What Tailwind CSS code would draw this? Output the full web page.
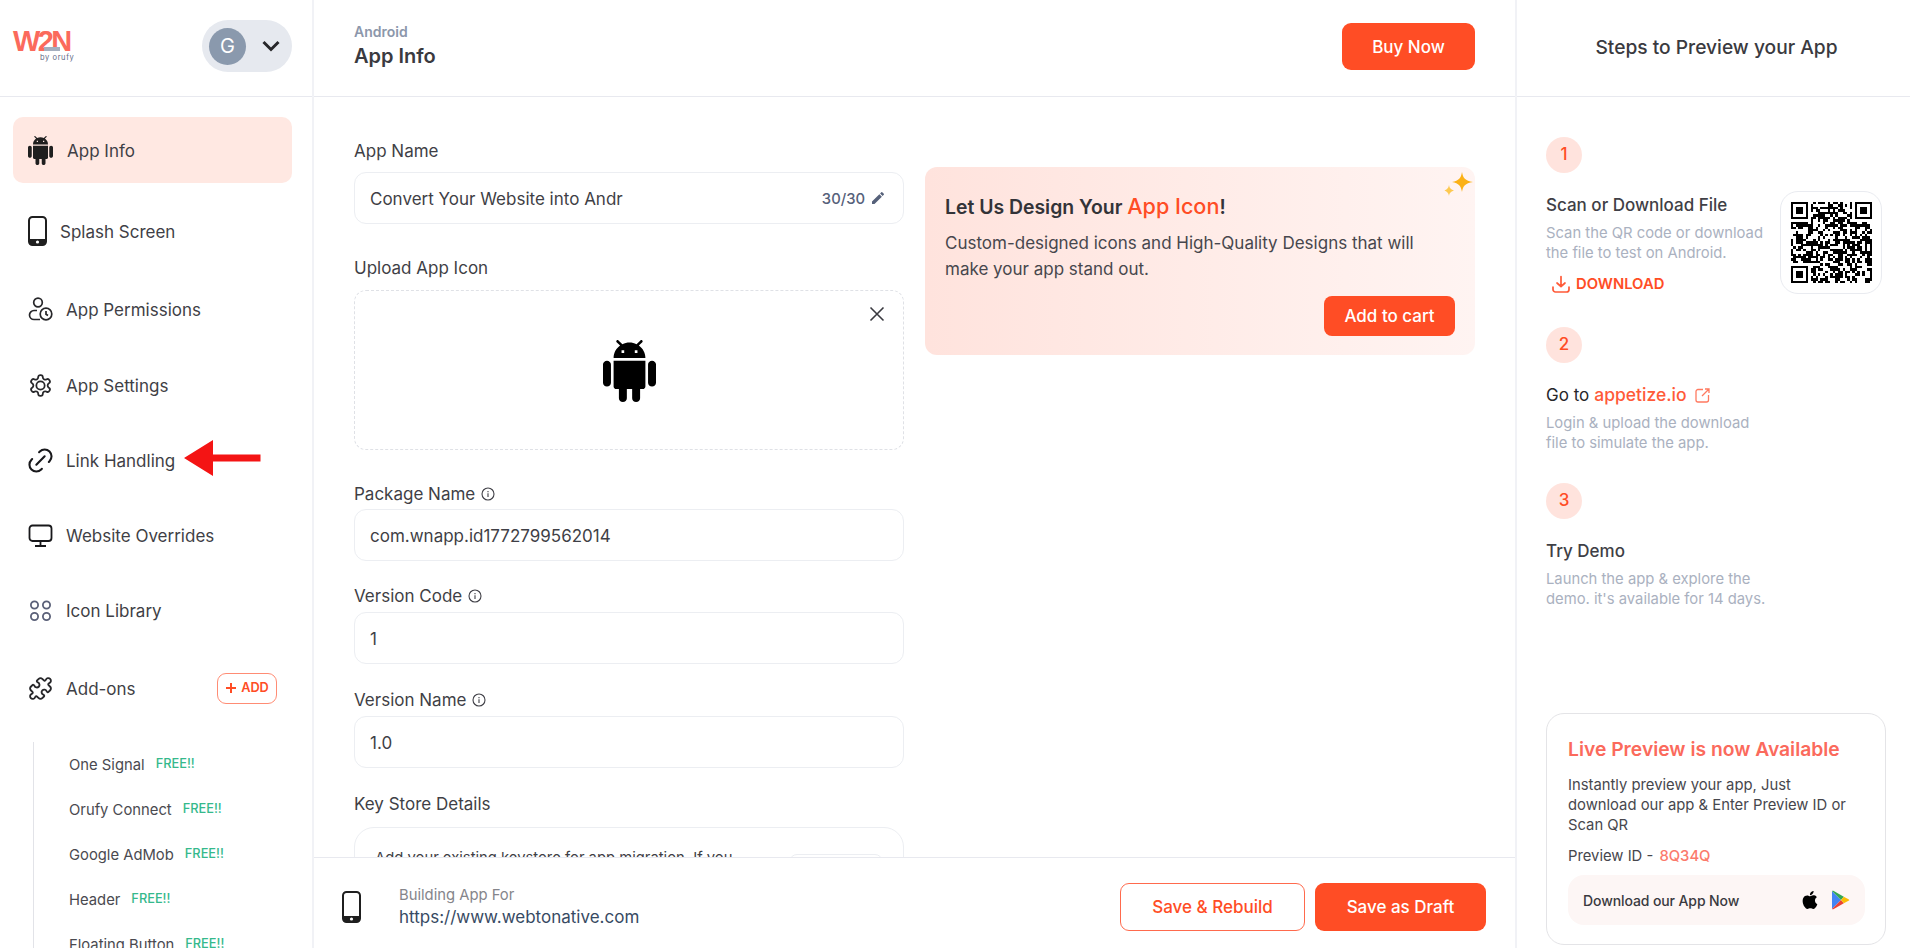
<!DOCTYPE html>
<html lang="en">
<head>
    <meta charset="UTF-8">
    <title>App Info</title>
    <script src="https://cdn.jsdelivr.net/npm/@tailwindcss/browser@4"></script>
</head>
<body class="bg-white font-[Inter,sans-serif] text-[#3f3f46] overflow-hidden">
<div class="relative flex h-[948px] w-[1910px] overflow-hidden">

    <!-- Sidebar -->
    <aside class="w-[314px] shrink-0 border-r-2 border-[#f1f2f6] flex flex-col overflow-hidden">
        <div class="h-[97px] shrink-0 border-b border-[#e8e9ef] flex items-start justify-between pl-[13px] pr-[20px]">
            <div class="relative w-[62px] h-[34px] mt-[28px]">
                <span class="absolute left-0 top-[1px] font-['Liberation_Sans'] font-bold text-[29px] leading-[24px] tracking-[-2.6px] text-[#fb6a5c]">W2N</span>
                <span class="absolute left-[31px] top-[19px] w-[16px] h-[4px] bg-[#a4aebe]"></span>
                <span class="absolute left-[27px] top-[25px] text-[7.5px] leading-[9px] tracking-[0.6px] text-[#5f6b86] whitespace-nowrap">by orufy</span>
            </div>
            <div class="mt-[20px] w-[90px] h-[52px] rounded-full bg-[#e6e9ef] flex items-center pl-[7px]">
                <div class="w-[37px] h-[37px] rounded-full bg-[#8a99ad] text-white text-[20px] flex items-center justify-center">G</div>
                <svg class="ml-[15px]" width="20" height="14" viewBox="0 0 20 14" fill="none" stroke="#27272a" stroke-width="3"><path d="M2.500 3l7.500 7.500L17.500 3"/></svg>
            </div>
        </div>
        <nav class="pl-[13px] pr-[20px] pt-[20px] text-[17px]">
            <a class="h-[66px] rounded-[10px] bg-[#ffe8e2] flex items-center pl-[15px] gap-[14px]">
                <svg width="25" height="29" viewBox="2 0 20 24" preserveAspectRatio="none" fill="#1f1f1f"><path d="M6 18c0 .55.45 1 1 1h1v3.5c0 .83.67 1.5 1.5 1.5s1.5-.67 1.5-1.5V19h2v3.5c0 .83.67 1.5 1.5 1.5s1.5-.67 1.5-1.5V19h1c.55 0 1-.45 1-1V8H6v10zM3.5 8C2.67 8 2 8.67 2 9.5v7c0 .83.67 1.5 1.5 1.5S5 17.33 5 16.5v-7C5 8.67 4.33 8 3.5 8zm17 0c-.83 0-1.5.67-1.5 1.5v7c0 .83.67 1.5 1.5 1.5s1.5-.67 1.5-1.5v-7c0-.83-.67-1.5-1.5-1.5zm-4.97-5.84l1.3-1.3c.2-.2.2-.51 0-.71-.2-.2-.51-.2-.71 0l-1.48 1.48C13.85 1.23 12.95 1 12 1c-.96 0-1.86.23-2.66.63L7.85.15c-.2-.2-.51-.2-.71 0-.2.2-.2.51 0 .71l1.31 1.31C6.97 3.26 6 5.01 6 7h12c0-1.99-.97-3.75-2.47-4.84zM10 5H9V4h1v1zm5 0h-1V4h1v1z"/></svg>
                <span class="pt-[3px]">App Info</span>
            </a>
            <a class="mt-[15px] h-[66px] flex items-center pl-[15px] gap-[13px]">
                <svg width="19" height="30" viewBox="0 0 19 30"><rect x="1" y="1" width="17" height="28" rx="3.5" fill="none" stroke="#1f1f1f" stroke-width="2"/><path d="M1 23h17v3a3 3 0 0 1-3 3H4a3 3 0 0 1-3-3z" fill="#1f1f1f"/><circle cx="9.5" cy="26" r="1.6" fill="#fff"/></svg>
                <span class="pt-[3px]">Splash Screen</span>
            </a>
            <a class="mt-[12px] h-[66px] flex items-center pl-[15px] gap-[13px]">
                <svg width="25" height="24" viewBox="0 0 25 24" fill="none" stroke="#27272a" stroke-width="1.7"><circle cx="10" cy="5.5" r="4.3"/><path d="M9 13.5H6a4.5 4.5 0 0 0 0 9h6"/><circle cx="18" cy="17" r="5.8"/><path d="M18 14v3.2l2 1.3"/></svg>
                <span class="pt-[3px]">App Permissions</span>
            </a>
            <a class="mt-[10px] h-[66px] flex items-center pl-[15px] gap-[13px]">
                <svg width="25" height="25" viewBox="0 0 24 24" fill="none" stroke="#27272a" stroke-width="1.7" stroke-linejoin="round"><path d="M12.22 2h-.44a2 2 0 0 0-2 2v.18a2 2 0 0 1-1 1.73l-.43.25a2 2 0 0 1-2 0l-.15-.08a2 2 0 0 0-2.73.73l-.22.38a2 2 0 0 0 .73 2.73l.15.1a2 2 0 0 1 1 1.72v.51a2 2 0 0 1-1 1.74l-.15.09a2 2 0 0 0-.73 2.73l.22.38a2 2 0 0 0 2.73.73l.15-.08a2 2 0 0 1 2 0l.43.25a2 2 0 0 1 1 1.73V20a2 2 0 0 0 2 2h.44a2 2 0 0 0 2-2v-.18a2 2 0 0 1 1-1.73l.43-.25a2 2 0 0 1 2 0l.15.08a2 2 0 0 0 2.73-.73l.22-.39a2 2 0 0 0-.73-2.73l-.15-.08a2 2 0 0 1-1-1.74v-.5a2 2 0 0 1 1-1.74l.15-.09a2 2 0 0 0 .73-2.73l-.22-.38a2 2 0 0 0-2.73-.73l-.15.08a2 2 0 0 1-2 0l-.43-.25a2 2 0 0 1-1-1.73V4a2 2 0 0 0-2-2z"/><circle cx="12" cy="12" r="4"/></svg>
                <span class="pt-[3px]">App Settings</span>
            </a>
            <a class="mt-[9px] h-[66px] flex items-center pl-[15px] gap-[13px]">
                <svg width="25" height="25" viewBox="3 3 18 18" fill="none" stroke="#18181b" stroke-width="1.500" stroke-linecap="round"><path d="M9 15l6-6"/><path d="M11 6l.5-.5a4.9 4.9 0 0 1 7 7l-.5.5"/><path d="M13 18l-.5.5a4.9 4.9 0 0 1-7-7l.5-.5"/></svg>
                <span class="pt-[3px]">Link Handling</span>
            </a>
            <a class="mt-[9px] h-[66px] flex items-center pl-[15px] gap-[13px]">
                <svg width="25" height="25" viewBox="0 0 25 25" fill="none" stroke="#18181b" stroke-width="1.8"><rect x="1.5" y="2.5" width="22" height="15.5" rx="3"/><path d="M12.5 18v4.5M7 23h11"/></svg>
                <span class="pt-[3px]">Website Overrides</span>
            </a>
            <a class="mt-[9px] h-[66px] flex items-center pl-[15px] gap-[13px]">
                <svg width="25" height="25" viewBox="0 0 25 25" fill="none" stroke="#5a6078" stroke-width="1.8"><circle cx="6.5" cy="7" r="3.6"/><circle cx="18.5" cy="7" r="3.6"/><circle cx="6.5" cy="18.5" r="3.6"/><circle cx="18.5" cy="18.5" r="3.6"/></svg>
                <span class="pt-[3px]">Icon Library</span>
            </a>
            <a class="mt-[12px] h-[66px] flex items-center pl-[15px] gap-[13px]">
                <svg width="25" height="25" viewBox="0 0 24 24" fill="none" stroke="#27272a" stroke-width="1.8" stroke-linejoin="round"><path d="M19.439 7.85c-.049.322.059.648.289.878l1.568 1.568c.47.47.706 1.087.706 1.704s-.235 1.233-.706 1.704l-1.611 1.611a.98.98 0 0 1-.837.276c-.47-.07-.802-.48-.968-.925a2.501 2.501 0 1 0-3.214 3.214c.446.166.855.497.925.968a.979.979 0 0 1-.276.837l-1.61 1.61a2.404 2.404 0 0 1-1.705.707 2.402 2.402 0 0 1-1.704-.706l-1.568-1.568a1.026 1.026 0 0 0-.877-.29c-.493.074-.84.504-1.02.968a2.5 2.5 0 1 1-3.237-3.237c.464-.18.894-.527.967-1.02a1.026 1.026 0 0 0-.289-.877l-1.568-1.568A2.402 2.402 0 0 1 1.998 12c0-.617.236-1.234.706-1.704L4.23 8.77c.24-.24.581-.353.917-.303.515.077.877.528 1.073 1.01a2.5 2.5 0 1 0 3.259-3.259c-.482-.196-.933-.558-1.01-1.073-.05-.336.062-.676.303-.917l1.525-1.525A2.402 2.402 0 0 1 12 1.998c.617 0 1.234.236 1.704.706l1.568 1.568c.23.23.556.338.877.29.493-.074.84-.504 1.02-.968a2.5 2.5 0 1 1 3.237 3.237c-.464.18-.894.527-.967 1.02Z"/></svg>
                <span class="pt-[3px]">Add-ons</span>
                <span class="ml-auto mr-[15px] w-[60px] h-[31px] rounded-[9px] border border-[#ff8c74] text-[#ff4d25] text-[12.75px] font-semibold flex items-center justify-center gap-[4px]">
                    <svg width="12" height="12" viewBox="0 0 12 12" stroke="#ff4d25" stroke-width="2"><path d="M6 1v10M1 6h10"/></svg>ADD
                </span>
            </a>
            <div class="mt-[21px] ml-[20px] border-l border-[#e2e3e8] pl-[35px] text-[14.8px] text-[#4a4a50]">
                <div class="h-[45px] flex items-center gap-[11px]"><span class="pt-[2px]">One Signal</span><span class="text-[12.8px] font-medium text-[#35b98c] -mt-[2px]">FREE!!</span></div>
                <div class="h-[45px] flex items-center gap-[11px]"><span class="pt-[2px]">Orufy Connect</span><span class="text-[12.8px] font-medium text-[#35b98c] -mt-[2px]">FREE!!</span></div>
                <div class="h-[45px] flex items-center gap-[11px]"><span class="pt-[2px]">Google AdMob</span><span class="text-[12.8px] font-medium text-[#35b98c] -mt-[2px]">FREE!!</span></div>
                <div class="h-[45px] flex items-center gap-[11px]"><span class="pt-[2px]">Header</span><span class="text-[12.8px] font-medium text-[#35b98c] -mt-[2px]">FREE!!</span></div>
                <div class="h-[45px] flex items-center gap-[11px]"><span class="pt-[2px]">Floating Button</span><span class="text-[12.8px] font-medium text-[#35b98c] -mt-[2px]">FREE!!</span></div>
            </div>
        </nav>
    </aside>

    <!-- Main column -->
    <main class="w-[1201px] shrink-0 flex flex-col h-full">
        <header class="h-[97px] shrink-0 border-b border-[#e8e9ef] flex items-center justify-between pl-[40px] pr-[40px]">
            <div class="-mt-[5px]">
                <div class="text-[14px] font-semibold leading-[20px] text-[#8c97ab]">Android</div>
                <div class="text-[20px] font-semibold leading-[28px] text-[#3a3a40]">App Info</div>
            </div>
            <button class="w-[133px] h-[47px] rounded-[9px] bg-[#ff4d25] text-white text-[17px] font-medium -mt-[3px] pt-[2px]">Buy Now</button>
        </header>

        <div class="flex-1 overflow-hidden flex pl-[40px] pr-[40px] pt-[41px] text-[17px]">
            <div class="w-[550px] shrink-0">
                <label class="block pt-[2px] leading-[22px]">App Name</label>
                <div class="mt-[10px] h-[52px] rounded-[12px] border border-[#eceef2] flex items-center pl-[15px] pr-[17px]">
                    <span class="pt-[3px]">Convert Your Website into Andr</span>
                    <span class="ml-auto text-[14.8px] font-medium text-[#56617a] pt-[2px]">30/30</span>
                    <svg class="ml-[5px]" width="16" height="16" viewBox="0 0 24 24" fill="#56617a"><path d="M3 17.25V21h3.75L17.81 9.94l-3.75-3.75L3 17.25zM20.71 7.04a1 1 0 0 0 0-1.41l-2.34-2.34a1 1 0 0 0-1.41 0l-1.83 1.83 3.75 3.75 1.83-1.83z"/></svg>
                </div>
                <label class="block mt-[31px] pt-[2px] leading-[22px]">Upload App Icon</label>
                <div class="relative mt-[11px] h-[160px] rounded-[12px] border border-dashed border-[#dfe1e6] flex items-center justify-center">
                    <svg class="absolute top-[14px] right-[17px]" width="18" height="18" viewBox="0 0 18 18" stroke="#3a3a40" stroke-width="1.6"><path d="M2.5 2.5l13 13M15.500 2.500l-13 13"/></svg>
                    <svg class="mt-[2px]" width="53" height="62" viewBox="2 0 20 24" preserveAspectRatio="none" fill="#000"><path d="M6 18c0 .55.45 1 1 1h1v3.5c0 .83.67 1.5 1.5 1.5s1.5-.67 1.5-1.5V19h2v3.5c0 .83.67 1.5 1.5 1.5s1.500-.67 1.500-1.500V19h1c.55 0 1-.45 1-1V8H6v10zM3.5 8C2.67 8 2 8.67 2 9.5v7c0 .83.67 1.5 1.5 1.5S5 17.33 5 16.5v-7C5 8.67 4.33 8 3.5 8zm17 0c-.83 0-1.5.67-1.5 1.5v7c0 .83.67 1.5 1.5 1.5s1.5-.67 1.5-1.5v-7c0-.83-.67-1.5-1.5-1.5zm-4.97-5.84l1.3-1.3c.2-.2.2-.51 0-.71-.2-.2-.51-.2-.71 0l-1.48 1.48C13.85 1.23 12.95 1 12 1c-.96 0-1.86.23-2.66.63L7.85.15c-.2-.2-.51-.2-.71 0-.2.2-.2.51 0 .71l1.31 1.31C6.97 3.26 6 5.01 6 7h12c0-1.99-.97-3.75-2.47-4.84zM10 5H9V4h1v1zm5 0h-1V4h1v1z"/></svg>
                </div>
                <label class="mt-[32px] leading-[24px] flex items-center gap-[6px]">Package Name
                    <svg width="14" height="14" viewBox="0 0 14 14" fill="none" stroke="#3f3f46" stroke-width="1.1"><circle cx="7" cy="7" r="6"/><path d="M7 6.300v3.700M7 4v1.200"/></svg>
                </label>
                <div class="mt-[3px] h-[52px] rounded-[12px] border border-[#eceef2] flex items-center pl-[15px] pt-[3px]">com.wnapp.id1772799562014</div>
                <label class="mt-[23px] leading-[24px] flex items-center gap-[6px]">Version Code
                    <svg width="14" height="14" viewBox="0 0 14 14" fill="none" stroke="#3f3f46" stroke-width="1.1"><circle cx="7" cy="7" r="6"/><path d="M7 6.300v3.700M7 4v1.200"/></svg>
                </label>
                <div class="mt-[4px] h-[52px] rounded-[12px] border border-[#eceef2] flex items-center pl-[15px] pt-[3px]">1</div>
                <label class="mt-[24px] leading-[24px] flex items-center gap-[6px]">Version Name
                    <svg width="14" height="14" viewBox="0 0 14 14" fill="none" stroke="#3f3f46" stroke-width="1.1"><circle cx="7" cy="7" r="6"/><path d="M7 6.300v3.700M7 4v1.200"/></svg>
                </label>
                <div class="mt-[4px] h-[52px] rounded-[12px] border border-[#eceef2] flex items-center pl-[15px] pt-[3px]">1.0</div>
                <label class="block mt-[24px] leading-[24px]">Key Store Details</label>
                <div class="mt-[11px] h-[120px] rounded-[20px] border border-[#eceef2] flex items-start pl-[20px] pr-[20px] pt-[20px] text-[14.8px]">
                    <span class="leading-[20px] whitespace-nowrap">Add your existing keystore for app migration. If you</span>
                    <span class="ml-auto w-[94px] h-[40px] rounded-[8px] border border-[#eceef2] mt-[6px]"></span>
                </div>
            </div>

            <!-- Promo card -->
            <div class="relative ml-[21px] mt-[29px] w-[551px] h-[188px] rounded-[12px] bg-gradient-to-r from-[#ffe3dd] to-[#fff4f2] pl-[20px] pr-[20px] pt-[25px] self-start">
                <svg class="absolute top-[3px] right-[1px]" width="30" height="31" viewBox="0 0 30 31"><path d="M18 2c1 6 3 8.500 11 10-8 1.500-10 4-11 10-1-6-3-8.500-10-10 7-1.500 9-4 10-10z" fill="#fbb116"/><path d="M5 15c.5 3 1.500 4 5 5.500-3.500 1.500-4.500 2.500-5 5.500-.5-3-1.500-4-4.500-5.500 3-1.500 4-2.500 4.500-5.500z" fill="#fdc94f"/></svg>
                <h2 class="text-[19.4px] font-semibold leading-[28px] text-[#333338]">Let Us Design Your <span class="text-[21.6px] font-medium text-[#ff4d25]">App Icon</span>!</h2>
                <p class="mt-[9px] leading-[26px] text-[#47474d]">Custom-designed icons and High-Quality Designs that will make your app stand out.</p>
                <button class="absolute right-[20px] bottom-[19px] w-[131px] h-[40px] rounded-[8px] bg-[#ff4d25] text-white font-medium pt-[1px]">Add to cart</button>
            </div>
        </div>

        <footer class="relative h-[91px] shrink-0 border-t border-[#e8e9ef] bg-white flex items-center pl-[28px] pr-[29px] pt-[8px]">
            <svg width="19" height="32" viewBox="0 0 19 32"><rect x="1" y="1" width="17" height="30" rx="3.500" fill="none" stroke="#1f1f1f" stroke-width="2"/><path d="M1 25h17v3a3 3 0 0 1-3 3H4a3 3 0 0 1-3-3z" fill="#1f1f1f"/><circle cx="9.500" cy="28" r="1.600" fill="#fff"/></svg>
            <div class="ml-[38px]">
                <div class="text-[14.8px] leading-[20px] text-[#85858b]">Building App For</div>
                <div class="text-[17px] leading-[24px] text-[#374a63]">https://www.webtonative.com</div>
            </div>
            <button class="ml-auto w-[185px] h-[48px] rounded-[9px] border border-[#ff6a4d] text-[17px] text-[#ff4d25] font-medium pt-[2px]">Save &amp; Rebuild</button>
            <button class="ml-[10px] w-[171px] h-[48px] rounded-[9px] bg-[#ff4d25] text-white text-[17px] font-medium pt-[2px]">Save as Draft</button>
        </footer>
    </main>

    <!-- Right panel -->
    <section class="flex-1 border-l-2 border-[#f1f2f6] flex flex-col overflow-hidden">
        <div class="h-[97px] shrink-0 border-b border-[#e8e9ef] flex items-center justify-center text-[19.2px] font-medium text-[#3a3a40] -mb-[1px] pb-[1px] pl-[6px]">Steps to Preview your App</div>
        <div class="pl-[29px] pr-[28px] pt-[41px] flex-1 flex flex-col">
            <div class="w-[36px] h-[36px] rounded-full bg-[#ffe3dd] text-[#ff4d25] text-[17px] font-medium flex items-center justify-center">1</div>
            <div class="flex mt-[20px] justify-between">
                <div>
                    <div class="text-[17px] font-medium leading-[24px]">Scan or Download File</div>
                    <div class="mt-[6px] text-[14.8px] leading-[20px] text-[#aab1c0] w-[225px]">Scan the QR code or download the file to test on Android.</div>
                    <div class="mt-[10px] flex items-center gap-[6px] ml-[6px] text-[14.8px] font-semibold text-[#ff4d25]">
                        <svg width="18" height="18" viewBox="0 0 18 18" fill="none" stroke="#ff5a38" stroke-width="1.700" stroke-linecap="round" stroke-linejoin="round"><path d="M9 1.500v10M5 8l4 3.500L13 8M1 12v2.500A2.500 2.500 0 0 0 3.500 17h11a2.500 2.500 0 0 0 2.500-2.500V12"/></svg>DOWNLOAD
                    </div>
                </div>
                <div class="w-[102px] h-[103px] rounded-[18px] border border-[#e9ebf0] flex items-center justify-center -mt-[2px]">
                    <svg id="qr" width="81" height="81" viewBox="0 0 33 33" shape-rendering="crispEdges"><path id="qr-path" fill="#000"/></svg>
                </div>
            </div>
            <div class="mt-[32px] w-[36px] h-[36px] rounded-full bg-[#ffe3dd] text-[#ff4d25] text-[17px] font-medium flex items-center justify-center">2</div>
            <div class="mt-[20px] flex items-center text-[17px] leading-[24px] text-[#27272a]">Go to <span class="ml-[5px] font-medium text-[#ff5a38] text-[17.5px]">appetize.io</span>
                <svg class="ml-[8px]" width="15" height="15" viewBox="0 0 15 15" fill="none" stroke="#ff7a60" stroke-width="1.300"><path d="M8 1.500H3a2 2 0 0 0-2 2v8.500a2 2 0 0 0 2 2h8.500a2 2 0 0 0 2-2V7M7 8l7-7M10 1h4v4"/></svg>
            </div>
            <div class="mt-[6px] text-[14.8px] leading-[20px] text-[#aab1c0] w-[225px]">Login &amp; upload the download file to simulate the app.</div>
            <div class="mt-[30px] w-[36px] h-[36px] rounded-full bg-[#ffe3dd] text-[#ff4d25] text-[17px] font-medium flex items-center justify-center">3</div>
            <div class="mt-[20px] text-[17px] font-medium leading-[24px]">Try Demo</div>
            <div class="mt-[6px] text-[14.8px] leading-[20px] text-[#aab1c0] w-[225px]">Launch the app &amp; explore the demo. it's available for 14 days.</div>

            <div class="mt-auto mb-[3px] w-[340px] h-[232px] rounded-[18px] border border-[#e4e4e7] pl-[21px] pr-[20px] pt-[21px]">
                <div class="text-[19.300px] font-semibold leading-[28px] text-[#fb6a5c]">Live Preview is now Available</div>
                <p class="mt-[12px] text-[14.8px] leading-[20px] text-[#47474d]">Instantly preview your app, Just<br>download our app &amp; Enter Preview ID or<br>Scan QR</p>
                <p class="mt-[11px] text-[14.8px] leading-[20px] text-[#47474d]">Preview ID - <span class="ml-[2px] text-[#fb7a6c] font-medium">8Q34Q</span></p>
                <div class="mt-[9px] h-[50px] rounded-[16px] bg-[#fdf6f5] flex items-center pl-[15px] pr-[15px] text-[14px] tracking-[-0.1px] font-medium text-[#3a3a40]">
                    <span>Download our App Now</span>
                    <svg class="ml-auto" width="18" height="20" viewBox="0 0 24 24" fill="#000"><path d="M12.152 6.896c-.948 0-2.415-1.078-3.96-1.04-2.04.027-3.91 1.183-4.961 3.014-2.117 3.675-.546 9.103 1.519 12.09 1.013 1.454 2.208 3.09 3.792 3.039 1.52-.065 2.09-.987 3.935-.987 1.831 0 2.35.987 3.96.948 1.637-.026 2.676-1.48 3.676-2.948 1.156-1.688 1.636-3.325 1.662-3.415-.039-.013-3.182-1.221-3.22-4.857-.026-3.04 2.48-4.494 2.597-4.559-1.429-2.09-3.623-2.324-4.39-2.376-2-.156-3.675 1.09-4.61 1.09zM15.530 3.830c.843-1.012 1.4-2.427 1.245-3.830-1.207.052-2.662.805-3.532 1.818-.78.896-1.454 2.338-1.273 3.714 1.338.104 2.715-.688 3.559-1.701"/></svg>
                    <svg class="ml-[12px]" width="19" height="20" viewBox="0 0 19 20"><path d="M1 1l9 9-9 9z" fill="#4285f4"/><path d="M1 1c.500-.400 1-.400 1.800 0l10 5.700L10 10z" fill="#34a853"/><path d="M1 19c.500.400 1 .400 1.800 0l10-5.700L10 10z" fill="#ea4335"/><path d="M12.800 6.700l4.700 2.500c1 .500 1 1.100 0 1.600l-4.700 2.500L10 10z" fill="#fbbc04"/></svg>
                </div>
            </div>
        </div>
    </section>

    <!-- Red annotation arrow -->
    <svg class="absolute left-[184px] top-[440px]" width="77" height="36" viewBox="0 0 77 36" fill="#f41414"><path d="M0 18L29 0v14.500h47.500v7H29V36z"/></svg>
</div>

<script>
    // Draw the QR code from a seeded pattern plus the three finder squares
    const size = 33;
    let seed = 7772;
    let d = '';
    function inFinder(x, y) {
        const left = x < 8, right = x >= size - 8, top = y < 8, bottom = y >= size - 8;
        return (left && top) || (right && top) || (left && bottom);
    }
    for (let y = 0; y < size; y++) {
        for (let x = 0; x < size; x++) {
            seed = (seed * 1103515245 + 12345) % 2147483648;
            if (!inFinder(x, y) && seed % 100 > 46) d += `M${x} ${y}h1v1h-1z`;
        }
    }
    [[0, 0], [26, 0], [0, 26]].forEach(([x, y]) => {
        d += `M${x} ${y}h7v7h-7zM${x + 1} ${y + 1}v5h5v-5zM${x + 2} ${y + 2}h3v3h-3z`;
    });
    const qrPath = document.getElementById('qr-path');
    qrPath.setAttribute('fill-rule', 'evenodd');
    qrPath.setAttribute('d', d);
</script>
</body>
</html>
